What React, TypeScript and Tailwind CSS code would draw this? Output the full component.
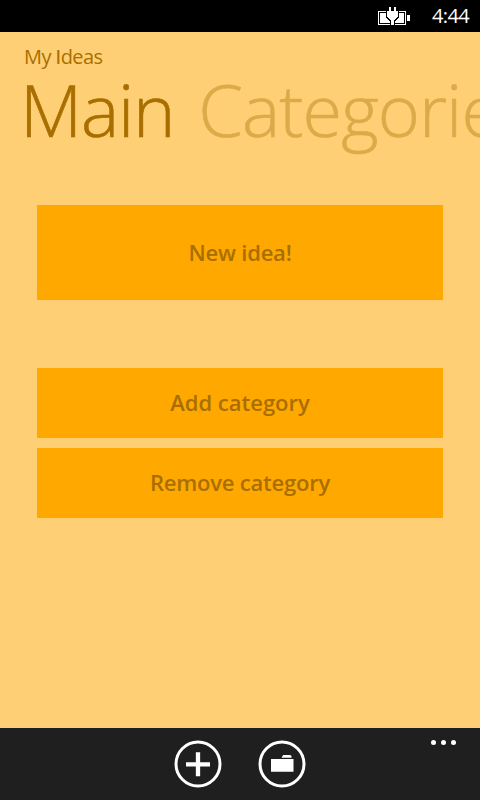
export default function App() {
  return (
    <div className="flex h-[800px] w-[480px] flex-col overflow-hidden bg-[#ffcf75] font-['Open_Sans','Noto_Sans',sans-serif] text-[#a86f00]">
      <header className="flex h-8 items-center justify-end bg-black pr-[10px] text-white">
        <svg className="mr-[22px]" width="32" height="18" viewBox="0 0 32 18" shapeRendering="crispEdges">
          <path d="M0 4h28v14H0z M1 5v12h26V5z" fill="#fff" fillRule="evenodd" />
          <path d="M2 6h24v10H2z M29 8h3v6h-3z" fill="#fff" />
          <path d="M8 4h13v7h-1v1h-1v1h-1v1h-1v4h-5v-4h-1v-1h-1v-1H9v-1H8z" fill="#000" />
          <path d="M11 0h2v4h3V0h2v4h2v6h-1v1h-1v1h-1v1h-1v5h-3v-5h-1v-1h-1v-1h-1v-1H9V4h2z" fill="#fff" />
        </svg>
        <span className="-mt-[1px] w-[38px] text-[20px] leading-8 tracking-[-0.6px]">4:44</span>
      </header>
      <main className="flex flex-1 flex-col">
        <p className="mt-[11px] h-[27px] pl-6 text-[20px] leading-[27px] tracking-[-0.55px]">My <span className="font-['Lato']">I</span>deas</p>
        <div className="-mr-40 flex h-[98px] gap-[24px] whitespace-nowrap pl-[20px] text-[72px] font-light leading-[98px] tracking-[-1.2px]">
          <h1 className="-mt-[10px] [-webkit-text-stroke:0.6px]">Main</h1>
          <h2 className="-mt-[10px] tracking-[-0.9px] text-[#dcab49] [-webkit-text-stroke:0.6px]">Categories</h2>
        </div>
        <div className="mx-[37px] mt-[37px] flex flex-col text-[22px] font-semibold tracking-[-0.2px]">
          <button className="h-[95px] bg-[#ffa800]">New idea!</button>
          <button className="mt-[68px] h-[70px] bg-[#ffa800] pb-[2px] tracking-normal">Add category</button>
          <button className="mt-[10px] h-[70px] bg-[#ffa800] pb-[2px]">Remove category</button>
        </div>
      </main>
      <footer className="relative flex h-[72px] items-center justify-center gap-9 bg-[#1f1f1f]">
        <svg width="48" height="48" viewBox="0 0 48 48"><circle cx="24" cy="24" r="22" fill="none" stroke="#fff" strokeWidth="3"/><path d="M12 24.3h24M24 12.3v24" stroke="#fff" strokeWidth="4.3"/></svg>
        <svg width="48" height="48" viewBox="0 0 48 48"><circle cx="24" cy="24" r="22" fill="none" stroke="#fff" strokeWidth="3"/><path d="M13 19h22.5v12.7H13zM23.5 17.8l1.7-2.8h7l1.3 1v1.8z" fill="#fff"/></svg>
        <div className="absolute right-6 top-3 flex gap-[5px]"><i className="size-[5px] rounded-full bg-white"/><i className="size-[5px] rounded-full bg-white"/><i className="size-[5px] rounded-full bg-white"/></div>
      </footer>
    </div>
  );
}
